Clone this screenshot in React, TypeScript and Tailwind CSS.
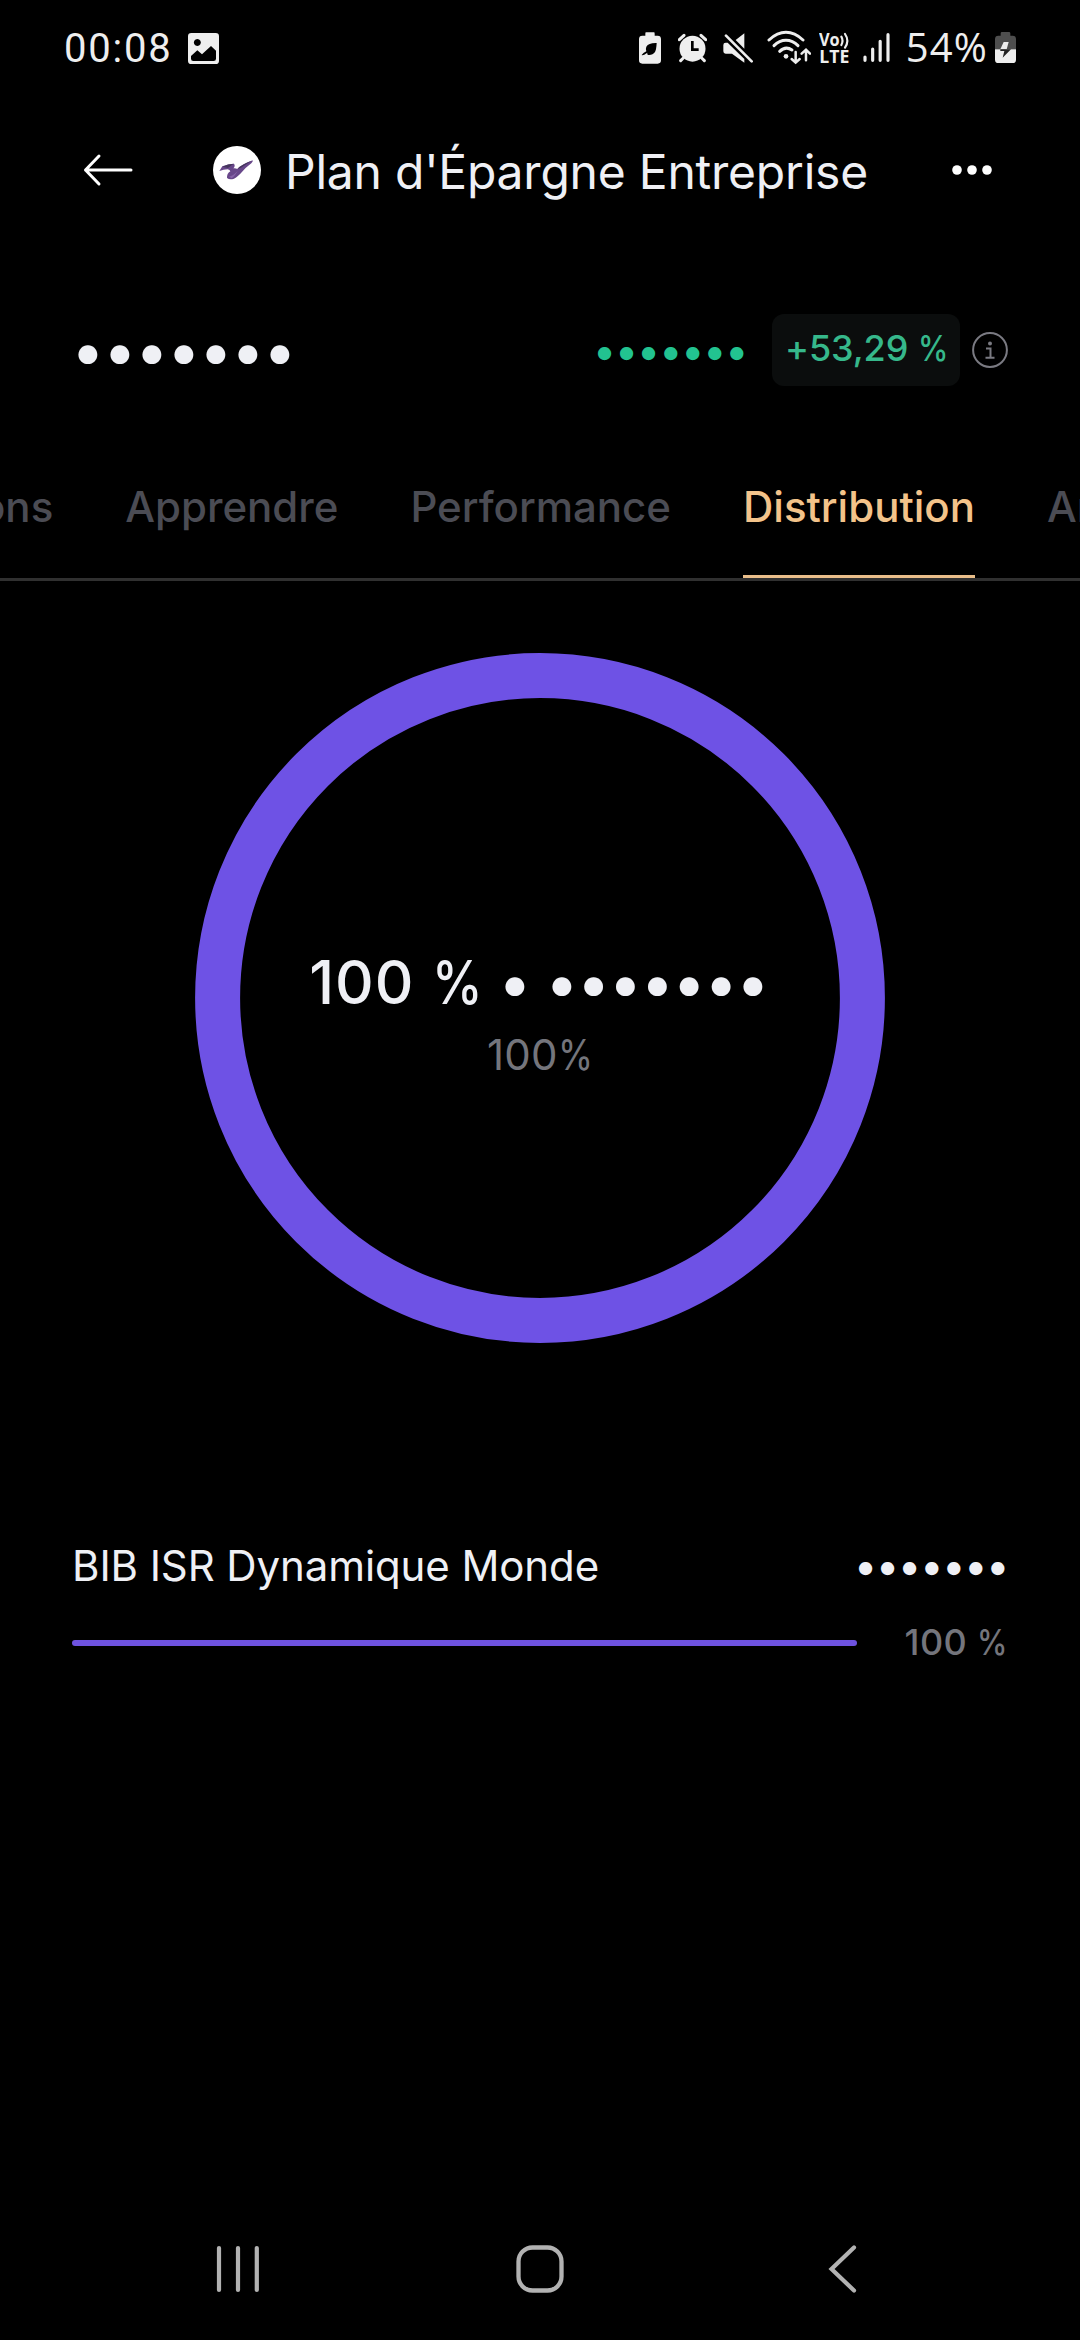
import type { ReactNode } from "react";

const INK = "#eeeeee";

function StatusGlyph({ x, w, className, children }: { x: number; w: number; className: string; children: ReactNode }) {
  return (
    <svg viewBox={`${x} 0 ${w} 240`} className={`h-20 shrink-0 ${className}`} fill={INK} stroke="none">
      {children}
    </svg>
  );
}

function StatusBar() {
  return (
    <div className="flex h-[97px] items-start pl-16 pt-[10px]">
      <span className="w-[124px] font-[Roboto] text-[40px] leading-[77px] tracking-[1.8px] text-[#eeeeee]">00:08</span>
      <StatusGlyph x={444} w={93} className="w-[31px]">
        <path
          fillRule="evenodd"
          d="M454 69H527Q537 69 537 79V152Q537 162 527 162H454Q444 162 444 152V79Q444 69 454 69ZM472 87a10.500 10.500 0 1 0 .1 0ZM453 138V146Q453 153 460 153H521Q528 153 528 146V122L513 108L486 133L472 121Z"
        />
      </StatusGlyph>

      <StatusGlyph x={57} w={66} className="ml-[420px] w-[22px]">
        <path
          fillRule="evenodd"
          d="M78 67H102Q104 67 104 71V77H113Q123 77 123 87V151Q123 161 113 161H67Q57 161 57 151V87Q57 77 67 77H76V71Q76 67 78 67ZM110 99Q86 98 79 110Q76 117 79 124Q69 129 65 135Q68 138 82 128Q80 134 85 135Q98 136 105 126Q109 119 110 99Z"
        />
      </StatusGlyph>
      <StatusGlyph x={174} w={87} className="ml-[17px] w-[29px]">
        <circle cx="217.500" cy="116" r="39" />
        <g stroke={INK} strokeWidth="9" strokeLinecap="round">
          <path d="M178 89 192 76M257 89 243 76M190 144 182 152M245 144 253 152" />
        </g>
        <path d="M217 93V119H236" fill="none" stroke="#000" strokeWidth="8" />
      </StatusGlyph>
      <StatusGlyph x={308} w={90} className="ml-[16px] w-[30px]">
        <path d="M309 105Q309 98 316 98H322L372 147V158L335 131H316Q309 131 309 124ZM346 90 372 70V116Z" />
        <path d="M317 77 394 154" stroke={INK} strokeWidth="8" strokeLinecap="round" />
      </StatusGlyph>
      <StatusGlyph x={439} w={134} className="ml-[13.500px] w-[44.660px]">
        <g fill="none" stroke={INK} strokeWidth="9" strokeLinecap="round">
          <path d="M445 90Q470 67 496 67Q522 67 547 90" />
          <path d="M460 107Q476 91 496 91Q516 91 532 107" />
          <path d="M477 124Q495 107 514 120" />
        </g>
        <circle cx="496" cy="139" r="7" />
        <g fill="none" stroke={INK} strokeWidth="7.500" strokeLinecap="round">
          <path d="M525 126V157M513 147 525 158 537 147M556 151V120M543 131 556 119 568 131" />
        </g>
      </StatusGlyph>
      <StatusGlyph x={597} w={96} className="ml-[7.500px] w-8">
        <text x="597" y="107" fontFamily="Open Sans" fontWeight="700" fontSize="51" textLength="62" lengthAdjust="spacingAndGlyphs">
          Vo
        </text>
        <path d="M664 80Q671 92 664 105M675 72Q689 92 675 113" fill="none" stroke={INK} strokeWidth="6.500" strokeLinecap="round" />
        <text x="598" y="160" fontFamily="Open Sans" fontWeight="700" fontSize="52" textLength="90" lengthAdjust="spacingAndGlyphs">
          LTE
        </text>
      </StatusGlyph>
      <StatusGlyph x={729} w={81} className="ml-3 w-[27px]">
        <g stroke={INK} strokeWidth="9.500" strokeLinecap="round">
          <path d="M735 141V151M758 117V151M780.500 94V151M804 74V151" />
        </g>
      </StatusGlyph>
      <span className="ml-4 w-[89.500px] font-['Open_Sans'] text-[40px] leading-[74px] tracking-[1.2px] text-[#eeeeee]">54%</span>
      <StatusGlyph x={1125} w={63} className="w-[21px]">
        <path d="M1142 70Q1142 66 1146 66H1167Q1171 66 1171 70V77H1178Q1188 77 1188 87V118H1125V87Q1125 77 1135 77H1142Z" fill="#4e4e4e" />
        <path d="M1125 118H1188V149Q1188 159 1178 159H1135Q1125 159 1125 149Z" />
        <path d="M1151 96H1166L1160 118H1141Z" />
        <path d="M1160 118H1173L1148 143L1153 123H1141V118Z" fill="#222" />
      </StatusGlyph>
    </div>
  );
}

function Header() {
  return (
    <header className="flex h-[146px] items-center pl-[83px]">
      <svg viewBox="0 0 50 34" className="h-[34px] w-[50px]" fill="none" stroke="#fff" strokeWidth="3" strokeLinecap="round" strokeLinejoin="round">
        <path d="M48 17H2.500M16 3 2.500 17 16 31" />
      </svg>
      <svg viewBox="0 0 144 144" className="ml-20 size-12">
        <circle cx="72" cy="72" r="72" fill="#fff" />
        <path d="M19 75 28 61Q45 53 63 53Q68 60 61 67Q68 66 73 69Q86 55 119 43Q121 46 115 52Q97 65 82 83Q70 95 63 98Q50 103 42 96Q41 83 52 76Q51 71 44 70Q32 71 19 75Z" fill="#68478a" />
        <path d="M28 62Q46 53 62 53L45 66ZM73 69Q86 55 115 45L84 65Z" fill="#45355c" />
        <path d="M48 92Q60 90 74 75Q64 92 56 97Z" fill="#8763a8" />
      </svg>
      <h1 className="ml-6 translate-y-[1.500px] whitespace-nowrap text-[48px] leading-[60px] tracking-[-0.22px] text-[#eff0f5]">
        Plan d'Épargne Entreprise
      </h1>
      <svg viewBox="0 0 40 10" className="ml-auto mr-[88px] h-[10px] w-10" fill="#fff">
        <circle cx="5" cy="5" r="4.800" />
        <circle cx="20" cy="5" r="4.800" />
        <circle cx="35" cy="5" r="4.800" />
      </svg>
    </header>
  );
}

/* Condensed percent sign used after every amount. */
function Percent() {
  return <span className="-mr-[0.15em] inline-block origin-left scale-x-[0.85]">%</span>;
}

function Summary() {
  return (
    <section className="mt-[71px] flex h-[72px] items-center pl-[71px] pr-[72px]">
      <span className="text-[60px] leading-[72px] tracking-[-1.75px] text-[#eff0f5]">•••••••</span>
      <div className="ml-auto flex items-center">
        <span className="translate-y-px text-[42px] leading-[72px] tracking-[-1.6px] text-[#22c390]">•••••••</span>
        <span className="ml-[25px] flex h-[72px] w-[188px] items-center whitespace-nowrap rounded-xl bg-[#0b0d0d] pl-[13px] text-[36px] font-medium leading-[66px] tracking-[-0.1px] text-[#36b88b]">
          <span className="-translate-y-[2px]">+53,29 <Percent /></span>
        </span>
        <svg viewBox="0 0 36 36" className="ml-3 size-9" fill="none" stroke="#7a7a82" strokeWidth="2">
          <circle cx="18" cy="18" r="16.900" />
          <path d="M14 16.500H18.500V25.500M13.500 25.700H22.500" />
          <circle cx="18" cy="11.500" r="2" fill="#7a7a82" stroke="none" />
        </svg>
      </div>
    </section>
  );
}

const tabs = ["ons", "Apprendre", "Performance", "Distribution", "An"];

function Tabs() {
  return (
    <nav className="mt-[76px] flex h-[119px] gap-[72px] overflow-hidden whitespace-nowrap border-b-[3px] border-[#303030] text-[42px] font-medium text-[#4b4c54]">
      {tabs.map((tab, i) => (
        <div
          key={tab}
          className={`h-full shrink-0 leading-[90px] ${i === 0 ? "-ml-[20px]" : ""} ${tab === "Distribution" ? "border-b-[3px] border-[#e9be8a] text-[#f3c38a]" : ""}`}
        >
          {tab}
        </div>
      ))}
    </nav>
  );
}

function Donut() {
  return (
    <section className="mx-auto mt-[71.500px] grid size-[690px] justify-items-center">
      <svg viewBox="0 0 690 690" className="col-start-1 row-start-1 size-[690px]" fill="none">
        <circle cx="345" cy="345" r="322.400" stroke="#6e52e5" strokeWidth="45" />
      </svg>
      <div className="col-start-1 row-start-1 mt-[293px] flex flex-col items-center whitespace-nowrap">
        <p className="mr-[3px] text-[60px] font-medium leading-[72px] tracking-[1px] text-[#eff0f5]">
          100 <Percent />
          <span className="font-normal tracking-[-1.9px]"> • •••••••</span>
        </p>
        <p className="text-[42px] leading-[73px] tracking-[0.3px] text-[#74757c]">
          100<Percent />
        </p>
      </div>
    </section>
  );
}

function Holdings() {
  return (
    <section className="mt-[193px] px-[72px]">
      <div className="flex h-[60px] items-center justify-between text-[42px] text-[#eff0f5]">
        <span className="tracking-[-0.1px]">BIB ISR Dynamique Monde</span>
        <span className="tracking-[-1.6px]">•••••••</span>
      </div>
      <div className="mt-[25px] flex h-11 items-center">
        <div className="h-[6px] w-[785px] rounded-full bg-[#6e52e0]" />
        <span className="ml-12 -translate-y-px whitespace-nowrap text-[36px] font-medium leading-[44px] tracking-[0.4px] text-[#74757c]">
          100 <Percent />
        </span>
      </div>
    </section>
  );
}

function SystemNav() {
  return (
    <div className="mb-[46px] mt-auto flex h-[50px] items-center pl-[216px]">
      <svg viewBox="0 0 44 50" className="h-[50px] w-11" stroke="#b2b2b2" strokeWidth="4.200" strokeLinecap="round">
        <path d="M3 4V46M22 4V46M40.800 4V46" />
      </svg>
      <svg viewBox="0 0 50 50" className="ml-[255px] size-[50px]" fill="none" stroke="#b2b2b2" strokeWidth="4.300">
        <rect x="3.500" y="3.500" width="43" height="43" rx="14" />
      </svg>
      <svg viewBox="0 0 30 50" className="ml-[263px] h-[50px] w-[30px]" fill="none" stroke="#b2b2b2" strokeWidth="4.200" strokeLinecap="round">
        <path d="M26 3.500 3.500 25 26 46.500" />
      </svg>
    </div>
  );
}

export default function App() {
  return (
    <main className="flex h-[2340px] w-[1080px] flex-col overflow-hidden bg-black font-[Inter,sans-serif]">
      <StatusBar />
      <Header />
      <Summary />
      <Tabs />
      <Donut />
      <Holdings />
      <SystemNav />
    </main>
  );
}
